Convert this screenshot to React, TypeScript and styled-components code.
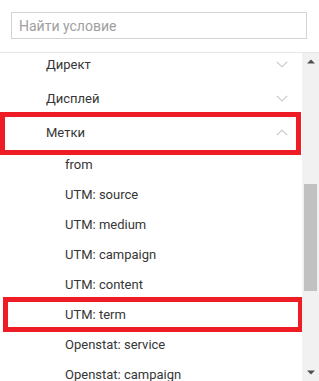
import React from "react";
import styled, { createGlobalStyle } from "styled-components";

const Global = createGlobalStyle`
  html, body { margin: 0; padding: 0; background: #fff; }
  body { font-family: Roboto, "Liberation Sans", Arial, sans-serif; }
  * { box-sizing: border-box; }
`;

const Page = styled.div`
  width: 319px;
  height: 381px;
  display: flex;
  flex-direction: column;
  overflow: hidden;
  background: #fff;
`;

const Header = styled.div`
  padding: 12px 12px 13px 11px;
  border-bottom: 1px solid #e6e6e6;
`;

const Search = styled.input`
  display: block;
  width: 296px;
  height: 27px;
  border: 1px solid #d3d3d3;
  padding: 0 7px;
  font: 14px Roboto, "Liberation Sans", Arial, sans-serif;
  color: #222;
  outline: none;
  &::placeholder { color: #a0a0a0; }
`;

const Body = styled.div`
  flex: 1;
  display: flex;
  min-height: 0;
`;

const List = styled.div`
  flex: 1;
  overflow: hidden;
`;

const Inner = styled.div`
  margin-top: -6px;
  display: flex;
  flex-direction: column;
`;

const Row = styled.div<{ $child?: boolean }>`
  position: relative;
  height: ${(p) => (p.$child ? 30 : 34)}px;
  display: flex;
  align-items: center;
  padding-left: ${(p) => (p.$child ? 65 : 46)}px;
  padding-right: 14px;
  font-size: 13px;
  color: #363636;
`;

const Label = styled.span`
  flex: 1;
`;

const Highlight = styled.div<{ $top: number; $left: number; $right: number; $h: number }>`
  position: absolute;
  top: ${(p) => p.$top}px;
  left: ${(p) => p.$left}px;
  right: ${(p) => p.$right}px;
  height: ${(p) => p.$h}px;
  border: 5px solid #ee1c25;
  pointer-events: none;
  z-index: 2;
`;

const Scrollbar = styled.div`
  width: 17px;
  background: #f1f1f1;
  display: flex;
  flex-direction: column;
  align-items: center;
`;

const ArrowBtn = styled.div`
  height: 17px;
  width: 17px;
  display: flex;
  align-items: center;
  justify-content: center;
`;

const Track = styled.div`
  flex: 1;
  width: 100%;
  padding: 0 2px;
`;

const Thumb = styled.div`
  margin-top: 114px;
  height: 107px;
  background: #c1c1c1;
`;

const Chevron = ({ up }: { up?: boolean }) => (
  <svg width="12" height="7" viewBox="0 0 12 7" fill="none">
    <path
      d={up ? "M0.8 6.2 L6 1.2 L11.2 6.2" : "M0.8 0.8 L6 5.8 L11.2 0.8"}
      stroke="#c4c4c4"
      strokeWidth="1.1"
    />
  </svg>
);

const Tri = ({ up }: { up?: boolean }) => (
  <svg width="8" height="5" viewBox="0 0 8 5">
    <path d={up ? "M0 4.5 L4 0.5 L8 4.5 Z" : "M0 0.5 L4 4.5 L8 0.5 Z"} fill="#505050" />
  </svg>
);

const groups = [
  { name: "Директ", open: false },
  { name: "Дисплей", open: false },
  { name: "Метки", open: true },
];

const children = [
  "from",
  "UTM: source",
  "UTM: medium",
  "UTM: campaign",
  "UTM: content",
  "UTM: term",
  "Openstat: service",
  "Openstat: campaign",
];

export default function App() {
  return (
    <Page>
      <Global />
      <Header>
        <Search placeholder="Найти условие" />
      </Header>
      <Body>
        <List>
          <Inner>
            {groups.map((g) => (
              <Row key={g.name}>
                <Label>{g.name}</Label>
                <Chevron up={g.open} />
                {g.name === "Метки" && <Highlight $top={-3} $left={0} $right={1} $h={43} />}
              </Row>
            ))}
            {children.map((c) => (
              <Row $child key={c}>
                <Label>{c}</Label>
                {c === "UTM: term" && <Highlight $top={-2} $left={3} $right={-1} $h={35} />}
              </Row>
            ))}
          </Inner>
        </List>
        <Scrollbar>
          <ArrowBtn>
            <Tri up />
          </ArrowBtn>
          <Track>
            <Thumb />
          </Track>
          <ArrowBtn>
            <Tri />
          </ArrowBtn>
        </Scrollbar>
      </Body>
    </Page>
  );
}
